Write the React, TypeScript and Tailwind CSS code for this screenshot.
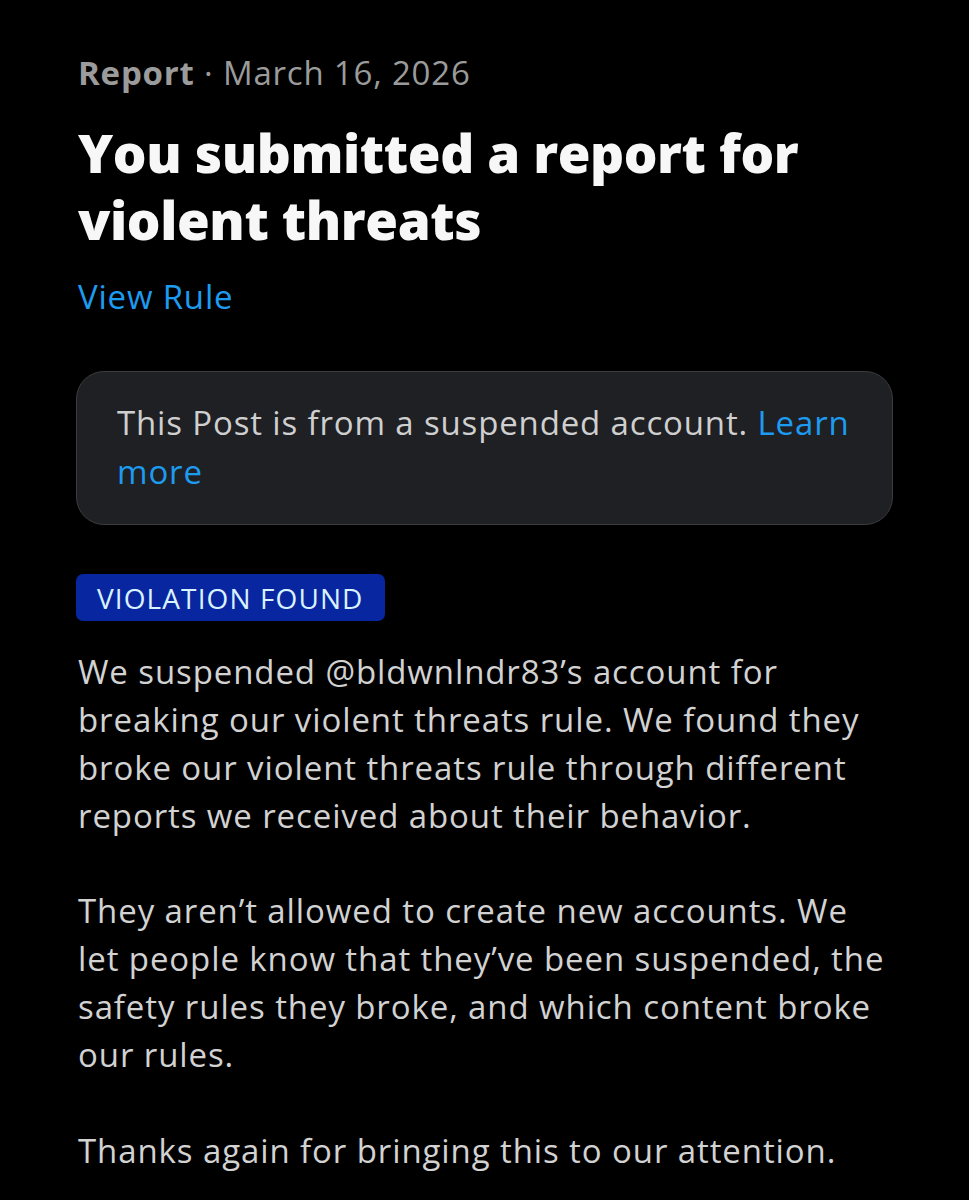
export default function App() {
  return (
    <div className="min-h-[1200px] w-[969px] bg-black font-['Open_Sans',sans-serif] text-[#d2d2d2]">
      <div className="px-[78px] pt-[50px]">
        <p className="text-[33px] leading-[46px] tracking-[0.8px] text-[#9b9b9b]">
          <span className="font-bold">Report</span> · March 16, 2026
        </p>
        <h1 className="mt-[23px] text-[53px] font-extrabold leading-[67px] tracking-[-0.4px] text-[#f7f7f7]">
          You submitted a report for
          <br />
          violent threats
        </h1>
        <a className="mt-[22px] block text-[33px] leading-[44px] tracking-[0.8px] text-[#1d9bf0]">View Rule</a>

        <div className="-mx-[2px] mt-[52px] rounded-[28px] border border-[#3b3c40] bg-[#1f2024] px-[40px] pb-[28px] pt-[26px] text-[33px] leading-[49px] tracking-[0.85px] text-[#cfcfcf]">
          This Post is from a suspended account. <span className="text-[#1d9bf0]">Learn</span>
          <br />
          <span className="text-[#1d9bf0]">more</span>
        </div>

        <span className="-ml-[2px] mt-[49px] inline-flex h-[47px] items-center rounded-[7px] bg-[#0826a0] px-[21px] text-[28px] tracking-[1.1px] text-[#d8f2ff]">
          VIOLATION FOUND
        </span>

        <div className="mt-[27px] text-[33px] leading-[48px] tracking-[0.9px]">
          <p>
            We suspended @bldwnlndr83’s account for
            <br />
            breaking our violent threats rule. We found they
            <br />
            broke our violent threats rule through different
            <br />
            reports we received about their behavior.
          </p>
          <p className="mt-[47px]">
            They aren’t allowed to create new accounts. We
            <br />
            let people know that they’ve been suspended, the
            <br />
            safety rules they broke, and which content broke
            <br />
            our rules.
          </p>
          <p className="mt-[48px]">Thanks again for bringing this to our attention.</p>
        </div>
      </div>
    </div>
  );
}
